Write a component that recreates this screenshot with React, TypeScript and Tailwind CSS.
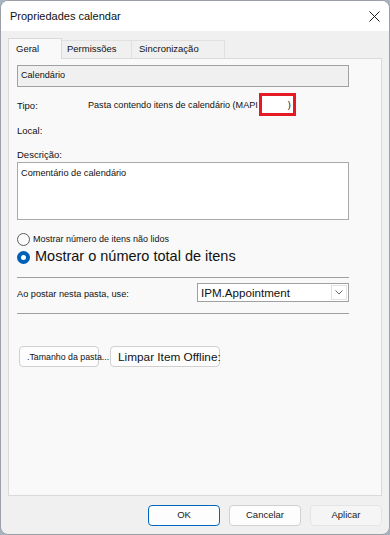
const font = "font-['Liberation_Sans',Arial,sans-serif]";

const Tab = ({
  label,
  active,
  className,
}: {
  label: string;
  active?: boolean;
  className: string;
}) =>
  active ? (
    <div
      className={`relative z-10 -mb-px flex h-[21px] items-center border border-b-0 border-[#d9d9d9] bg-[#f9f9f9] text-[9.5px] ${className}`}
    >
      {label}
    </div>
  ) : (
    <div
      className={`flex h-[18px] items-center border border-b-0 border-l-0 border-[#e0e0e0] bg-[#f0f0f0] text-[9.5px] ${className}`}
    >
      {label}
    </div>
  );

const Button = ({
  label,
  variant,
}: {
  label: string;
  variant?: "primary" | "disabled";
}) => {
  const border =
    variant === "primary"
      ? "border-[#0067c0] bg-[#fdfdfd]"
      : variant === "disabled"
        ? "border-[#e5e5e5] bg-[#f5f5f5]"
        : "border-[#d0d0d0] bg-[#fdfdfd]";
  return (
    <div
      className={`flex h-[21px] w-[72px] items-center justify-center rounded-[4px] border text-[9.5px] text-[#1a1a1a] ${border}`}
    >
      {label}
    </div>
  );
};

export default function App() {
  return (
    <div className={`h-[535px] w-[390px] bg-[#a7b4c0] ${font}`}>
      <div className="flex h-full flex-col overflow-hidden rounded-[8px] border border-[#9aa0a6] bg-[#f0f0f0] text-[#111]">
        {/* title bar */}
        <div className="flex h-[30px] shrink-0 items-center justify-between bg-white pl-[9px] pr-[9px]">
          <span className="text-[11px]">Propriedades calendar</span>
          <svg width="11" height="11" viewBox="0 0 11 11">
            <path d="M0.5 0.5 L10.5 10.5 M10.5 0.5 L0.5 10.5" stroke="#222" strokeWidth="1" />
          </svg>
        </div>

        <div className="flex flex-1 flex-col px-[7px]">
          {/* tabs */}
          <div className="mt-[7px] flex h-[20px] items-end">
            <Tab label="Geral" active className="w-[54px] pl-[7px]" />
            <Tab label="Permissões" className="w-[70px] pl-[5px]" />
            <Tab label="Sincronização" className="w-[93px] pl-[7px]" />
          </div>

          {/* panel */}
          <div className="flex h-[438px] flex-col border border-[#dadada] bg-[#f9f9f9] pl-[8px] text-[9.5px]">
            <div className="mt-[6px] flex h-[22px] w-[332px] items-center border border-[#a0a0a0] bg-[#f0f0f0] pl-[3px] text-[9.1px]">
              Calendário
            </div>

            <div className="mt-[6px] flex h-[23px] items-center">
              <span className="w-[71px] pt-[3px]">Tipo:</span>
              <span className="pt-[3px] text-[9.1px]">Pasta contendo itens de calendário (MAPI</span>
              <span className="ml-px flex h-[23px] w-[37px] items-center justify-end border-[3px] border-[#e51a24] bg-white pr-[2px] pt-[3px] text-[9.1px]">
                )
              </span>
            </div>

            <div className="mt-[7px] flex h-[16px] items-center">Local:</div>

            <div className="mt-[9px] flex h-[14px] items-center">Descrição:</div>
            <div className="h-[58px] w-[332px] border border-[#a9a9a9] bg-white px-[3px] pt-[4px] text-[9.2px]">
              Comentário de calendário
            </div>

            <div className="mt-[12px] flex h-[14px] items-center">
              <span className="h-[13px] w-[13px] rounded-full border border-[#5c5c5c] bg-[#fbfbfb]" />
              <span className="ml-[3px] pt-[2px] text-[9px]">Mostrar número de itens não lidos</span>
            </div>

            <div className="mt-[2px] flex h-[18px] items-center">
              <span className="flex h-[13px] w-[13px] items-center justify-center rounded-full bg-[#005fb8]">
                <span className="h-[5px] w-[5px] rounded-full bg-white" />
              </span>
              <span className="ml-[5px] text-[14.5px]">Mostrar o número total de itens</span>
            </div>

            <div className="mt-[11px] h-px w-[332px] bg-[#a0a0a0]" />

            <div className="mt-[5px] flex h-[19px] items-center">
              <span className="w-[180px] pt-[5px] text-[9.2px]">Ao postar nesta pasta, use:</span>
              <div className="flex h-[19px] w-[152px] items-center justify-between border border-[#a0a0a0] bg-white pl-[3px] pr-px">
                <span className="text-[11.6px]">IPM.Appointment</span>
                <span className="flex h-[15px] w-[16px] items-center justify-center border border-[#e3e3e3] bg-white">
                  <svg width="8" height="5" viewBox="0 0 8 5">
                    <path d="M0.5 0.5 L4 4 L7.5 0.5" fill="none" stroke="#555" strokeWidth="0.9" />
                  </svg>
                </span>
              </div>
            </div>

            <div className="mt-[11px] h-px w-[332px] bg-[#a0a0a0]" />

            <div className="mt-[32px] flex items-center">
              <div className="ml-[2px] flex h-[21px] w-[80px] items-center whitespace-nowrap rounded-[4px] border border-[#d0d0d0] bg-[#fdfdfd] pl-[7px] pt-[2px] text-[8.8px]">
                .Tamanho da pasta...
              </div>
              <div className="ml-[11px] flex h-[21px] w-[110px] items-center whitespace-nowrap rounded-[4px] border border-[#d0d0d0] bg-[#fdfdfd] pl-[7px] pt-[3px] text-[11.8px]">
                Limpar Item Offline:
              </div>
            </div>
          </div>

          {/* footer */}
          <div className="mt-[9px] flex justify-end gap-[9px]">
            <Button label="OK" variant="primary" />
            <Button label="Cancelar" />
            <Button label="Aplicar" variant="disabled" />
          </div>
        </div>
      </div>
    </div>
  );
}
